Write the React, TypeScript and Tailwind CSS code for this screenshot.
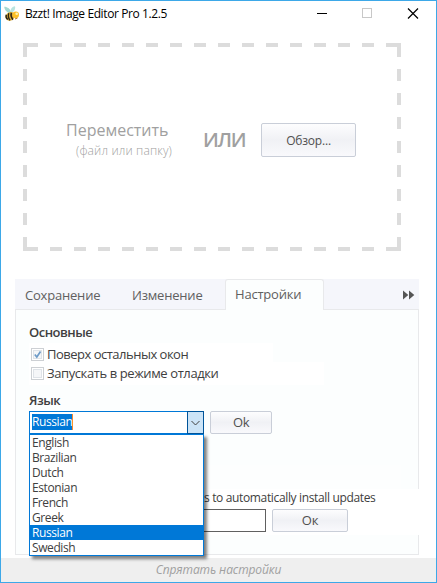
import { useState } from "react";

const languages = [
  "English",
  "Brazilian",
  "Dutch",
  "Estonian",
  "French",
  "Greek",
  "Russian",
  "Swedish",
];

const BeeIcon = () => (
  <svg className="h-4 w-4" viewBox="0 0 16 16">
    <path d="M7 7.500C3 7 .3 4 .3.800 3.500.8 6.500 3 7.500 7Z" fill="#a4d8d1" />
    <path d="M6.800 7C6 3.500 7.500 1 11 .300 11.800 3 10 6 7.500 7Z" fill="#b9e4df" />
    <ellipse cx="6.300" cy="10.300" rx="5" ry="4.200" fill="#dfae35" transform="rotate(-30 6.300 10.300)" />
    <path d="M2.300 8.700c-.7 2 .2 3.800 1.500 4.800M4.800 7.200c-1 2.500-.3 5 1.200 7.200M7.300 6.800c-.7 2.500 0 5 1.600 6.900" stroke="#2b2418" strokeWidth="1.400" fill="none" />
    <circle cx="11.800" cy="8.800" r="3.200" fill="#fcbf26" />
    <circle cx="12.700" cy="7.700" r="1.300" fill="#fff3b0" />
    <path d="M11 13l2.500-1" stroke="#bb7a18" strokeWidth="1" />
  </svg>
);

const DashedFrame = () => (
  <svg className="absolute inset-0 h-[208px] w-[378px]" viewBox="0 0 378 208" fill="none" stroke="#dcdcdc" strokeWidth="4">
    <path d="M3 2H363M3 206H363M2 2V204M376 2V204" strokeDasharray="12 12" />
    <path d="M0 2H15M363 2H378M0 206H15M363 206H378M2 0V14M376 0V14M2 194V208M376 194V208" />
  </svg>
);

const Button = ({ label, className }: { label: string; className: string }) => (
  <button
    className={`shrink-0 rounded-[2px] border border-[#c9ced8] bg-linear-to-b from-[#fdfdfe] via-[#f0f1f5] via-50% to-[#f9f9fc] text-[#505050] ${className}`}
  >
    {label}
  </button>
);

const Checkbox = ({ checked, onChange }: { checked: boolean; onChange: () => void }) => (
  <button
    onClick={onChange}
    className="flex h-[13px] w-[13px] shrink-0 items-center justify-center border border-[#cdd0d4] bg-white"
  >
    <svg className="h-[9px] w-[9px]" viewBox="0 0 9 9" fill="none">
      <rect x=".5" y=".5" width="8" height="8" fill="#f5f6f8" stroke="#dfe3e8" />
      {checked && <path d="M1.800 4.500l2 2.500L7.500 1.500" stroke="#6f9cc8" strokeWidth="1.700" />}
    </svg>
  </button>
);

const App = () => {
  const [onTop, setOnTop] = useState(true);
  const [debug, setDebug] = useState(false);
  const [language, setLanguage] = useState("Russian");

  return (
    <div className="flex h-[583px] w-[437px] flex-col overflow-hidden border border-[#3da8e8] bg-white font-['Open_Sans','Noto_Sans',sans-serif] whitespace-nowrap text-[#505050]">
      {/* Title bar */}
      <div className="flex h-[25px] shrink-0 items-center pl-[3px] text-black">
        <BeeIcon />
        <span className="ml-[5px] w-[260px] text-[12px] tracking-[-0.39px]">Bzzt! Image Editor Pro 1.2.5</span>
        <svg className="ml-[32px] h-[11px] w-[102px]" viewBox="0 0 102 11" fill="none" shapeRendering="crispEdges">
          <path d="M0 5.500H10" stroke="#000" />
          <rect x="45.500" y=".5" width="9" height="9" stroke="#c8c8c8" />
          <path d="M91 .5l10 10M101 .5l-10 10" stroke="#000" strokeWidth="1.200" shapeRendering="auto" />
        </svg>
      </div>

      {/* Drop zone */}
      <div className="relative mt-[17px] ml-[22px] flex h-[208px] w-[378px] shrink-0 items-start text-[#a0a0a0]">
        <DashedFrame />
        <div className="mt-[75px] ml-[43px] w-[137px]">
          <p className="h-[24px] text-[16px] leading-[24px]">Переместить</p>
          <p className="ml-[10px] text-[12px] leading-[17px] font-light tracking-[0.15px]">(файл или папку)</p>
        </div>
        <span className="mt-[83px] w-[58px] text-[20px] leading-[28px] font-semibold tracking-[-1.3px]">ИЛИ</span>
        <Button label="Обзор..." className="mt-[80px] h-[34px] w-[95px] pt-[2px] text-[12px] tracking-[-0.2px]" />
      </div>

      {/* Settings */}
      <div className="mt-[28px] ml-[14px] w-[404px] shrink-0">
        <div className="flex h-[31px] bg-[#f5f6fb] text-[13px] leading-[32px] tracking-[-0.2px] text-[#606060] shadow-[inset_0_-1px_0_#e8e9eb]">
          <span className="w-[107px] pl-[10px]">Сохранение</span>
          <span className="w-[103px] pl-[10px]">Изменение</span>
          <span className="w-[99px] rounded-t-[3px] border border-b-0 border-[#e8e9eb] bg-[#fcfefe] pl-[9px] leading-[29px]">
            Настройки
          </span>
          <svg className="mt-[11px] ml-[79px] h-[10px] w-[12px]" viewBox="0 0 12 10" fill="#555">
            <path d="M0 .5l5.300 4.500L0 9.500zM6 .5l5.300 4.500L6 9.500z" />
          </svg>
        </div>

        <div className="h-[245px] border border-t-0 border-[#e8e9eb] bg-[#fcfefe] pl-[13px] text-[13px] text-[#404040]">
          <p className="h-[33px] pt-[12px] leading-[20px] font-semibold tracking-[-0.5px]">Основные</p>
          <div className="flex h-[19px] w-[244px] items-center bg-white pt-[4px] pl-[2px] tracking-[-0.5px]">
            <Checkbox checked={onTop} onChange={() => setOnTop(!onTop)} />
            <span className="ml-[3px]">Поверх остальных окон</span>
          </div>
          <div className="flex h-[23px] w-[295px] items-center bg-white pl-[2px] tracking-[-0.4px]">
            <Checkbox checked={debug} onChange={() => setDebug(!debug)} />
            <span className="ml-[3px]">Запускать в режиме отладки</span>
          </div>
          <p className="mt-[5px] h-[21px] leading-[20px] font-semibold tracking-[-0.5px]">Язык</p>

          {/* Language select with its open list */}
          <div className="flex h-[23px] gap-[6px]">
            <div className="relative flex h-[23px] w-[175px] border border-[#0078d7] bg-white text-[12px] tracking-[-0.4px]">
              <span className="my-[2px] ml-[2px] h-[16px] border-r border-[#ff8728] bg-[#0078d7] leading-[16px] text-white">
                {language}
              </span>
              <span className="-my-px -mr-px ml-auto flex w-[17px] items-center justify-center border border-[#005499] bg-[#cce4f7]">
                <svg className="h-[6px] w-[9px]" viewBox="0 0 9 6" fill="none" stroke="#404040">
                  <path d="M.5 1l4 4 4-4" />
                </svg>
              </span>
              <ul className="absolute top-[22px] -left-px z-10 w-[175px] border border-[#0078d7] bg-white shadow-[3px_3px_3px_rgba(0,0,0,0.5)]">
                {languages.map((name) => (
                  <li
                    key={name}
                    onClick={() => setLanguage(name)}
                    className={`h-[15px] pl-[2px] leading-[16px] ${name === language ? "bg-[#0078d7] text-white" : ""}`}
                  >
                    {name}
                  </li>
                ))}
              </ul>
            </div>
            <Button label="Ok" className="h-[23px] w-[62px] text-[13px] tracking-[-0.4px]" />
          </div>

          {/* Updates */}
          <div className="mt-[31px] h-[24px] w-[372px] bg-[#fdfefe]" />
          <div className="-mr-px h-[46px] bg-white">
            <p className="h-[20px] pl-[175px] text-[12px] leading-[18px] tracking-[-0.35px]">s to automatically install updates</p>
            <div className="flex gap-[6px]">
              <div className="h-[23px] w-[237px] border border-[#606060] bg-white" />
              <Button label="Ок" className="h-[23px] w-[76px] text-[13px] tracking-[-0.2px]" />
            </div>
          </div>
        </div>
      </div>

      {/* Footer */}
      <div className="mt-auto h-[24px] shrink-0 bg-[#efefef] text-center text-[12px] leading-[24px] tracking-[-0.1px] text-[#a0a0a0] italic">
        Спрятать настройки
      </div>
    </div>
  );
};

export default App;
